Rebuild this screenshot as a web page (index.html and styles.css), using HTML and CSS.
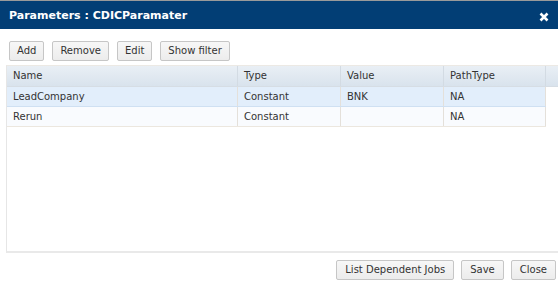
FILE: index.html
```html
<!DOCTYPE html>
<html>
<head>
<meta charset="utf-8">
<link rel="stylesheet" href="styles.css">
</head>
<body>
<div class="dialog">
  <div class="titlebar">
    <span class="title">Parameters : CDICParamater</span>
    <svg class="close" width="10" height="10" viewBox="0 0 10 10"><path d="M1.5 1.5 L8.5 8.5 M8.5 1.5 L1.5 8.5" stroke="#ffffff" stroke-width="2.6" stroke-linecap="butt"/></svg>
  </div>
  <div class="toolbar">
    <button class="btn">Add</button>
    <button class="btn">Remove</button>
    <button class="btn">Edit</button>
    <button class="btn">Show filter</button>
  </div>
  <div class="grid">
    <div class="row head">
      <div class="cell">Name</div>
      <div class="cell">Type</div>
      <div class="cell">Value</div>
      <div class="cell">PathType</div>
      <div class="cell filler"></div>
    </div>
    <div class="row sel">
      <div class="cell">LeadCompany</div>
      <div class="cell">Constant</div>
      <div class="cell">BNK</div>
      <div class="cell">NA</div>
    </div>
    <div class="row">
      <div class="cell">Rerun</div>
      <div class="cell">Constant</div>
      <div class="cell"></div>
      <div class="cell">NA</div>
    </div>
  </div>
  <div class="footer">
    <button class="btn wide">List Dependent Jobs</button>
    <button class="btn wide">Save</button>
    <button class="btn wide">Close</button>
  </div>
</div>
</body>
</html>
```
FILE: styles.css
```css
html, body {
  margin: 0;
  padding: 0;
  background: #ffffff;
}
body {
  font-family: "DejaVu Sans", Verdana, sans-serif;
  font-size: 10px;
  color: #333333;
}
.dialog {
  width: 558px;
  height: 283px;
  display: flex;
  flex-direction: column;
  overflow: hidden;
}
.titlebar {
  height: 28px;
  border-top: 1px solid #9a9a9a;
  background: #023e75;
  display: flex;
  align-items: center;
  justify-content: space-between;
  padding: 0 9px 0 9px;
}
.title {
  color: #ffffff;
  font-weight: bold;
  font-size: 11px;
  padding-top: 1px;
}
.close {
  margin-top: 4px;
  margin-right: 0px;
}
.toolbar {
  display: flex;
  gap: 8px;
  padding: 12px 0 0 9px;
  height: 20px;
}
.btn {
  font-family: "DejaVu Sans", Verdana, sans-serif;
  font-size: 10px;
  color: #333333;
  height: 20px;
  padding: 0 7px;
  border: 1px solid #c6c6c6;
  border-radius: 2px;
  background: linear-gradient(#f7f7f7, #ececec);
  line-height: 18px;
  margin: 0;
}
.btn.wide {
  padding: 0 8px;
}
.grid {
  margin: 4px 0 0 6px;
  height: 185px;
  border-left: 1px solid #e6e6e6;
  border-bottom: 2px solid #e9e9e9;
  border-top: 1px solid #ece9e4;
}
.row {
  display: grid;
  grid-template-columns: 231px 103px 103px 102px;
  height: 19px;
  border-bottom: 1px solid #ece7df;
  width: 539px;
  background: #f9fbfe;
}
.row.head {
  grid-template-columns: 231px 103px 103px 102px 12px;
  width: 551px;
  height: 20px;
  background: linear-gradient(#e9eff5, #d9e3ed);
  border-bottom: 1px solid #d6dde4;
}
.row.sel {
  background: #e2eefb;
  border-bottom: 1px solid #cfe0f2;
}
.cell {
  border-right: 1px solid #e4e0da;
  padding-left: 6px;
  line-height: 19px;
  white-space: nowrap;
  overflow: hidden;
}
.head .cell {
  line-height: 20px;
  border-right: 1px solid #d3dbe3;
}
.head .cell.filler {
  border-right: none;
}
.footer {
  display: flex;
  justify-content: flex-end;
  gap: 7px;
  padding: 7px 2px 0 0;
}
```
